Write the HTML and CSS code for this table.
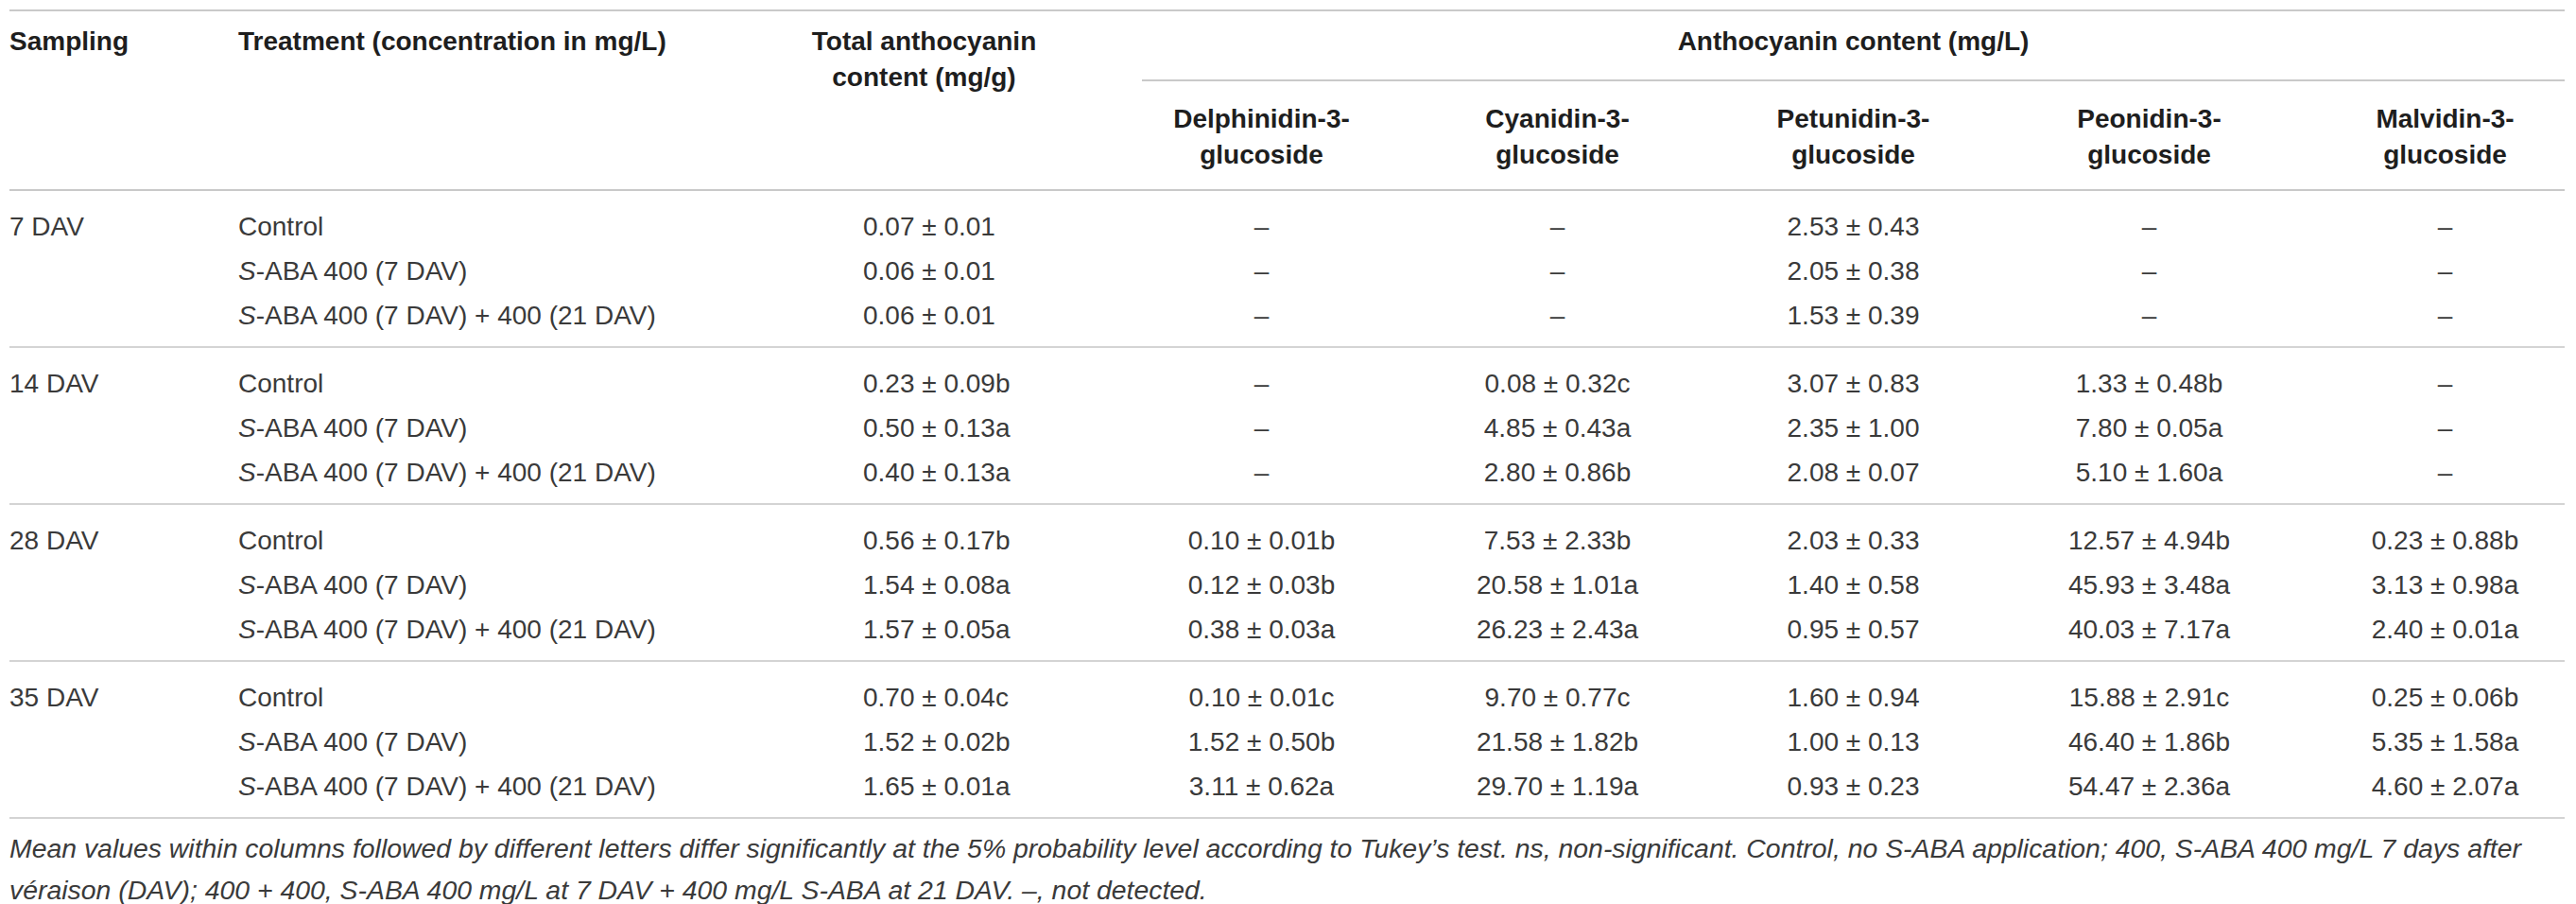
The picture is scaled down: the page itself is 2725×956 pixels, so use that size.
FILE: index.html
```html
<!DOCTYPE html>
<html lang="en">
  <head>
    <meta charset="UTF-8" />
    <meta name="viewport" content="width=device-width, initial-scale=1.0" />
    <title>Anthocyanin content</title>
    <link rel="stylesheet" href="styles.css">
  </head>
  <body>
    <div class="page">
      <table class="data">
        <colgroup>
          <col class="col-sampling" />
          <col class="col-treatment" />
          <col class="col-total" />
          <col class="col-anth" />
          <col class="col-anth" />
          <col class="col-anth" />
          <col class="col-anth" />
          <col class="col-anth" />
        </colgroup>
        <thead>
          <tr>
            <th rowspan="2" class="th-left">Sampling</th>
            <th rowspan="2" class="th-left">Treatment (concentration in mg/L)</th>
            <th rowspan="2" class="th-total">Total anthocyanin content (mg/g)</th>
            <th colspan="5" class="th-group"><div class="group-title">Anthocyanin content (mg/L)</div></th>
          </tr>
          <tr>
            <th class="th-sub">Delphinidin-3-glucoside</th>
            <th class="th-sub">Cyanidin-3-glucoside</th>
            <th class="th-sub">Petunidin-3-glucoside</th>
            <th class="th-sub">Peonidin-3-glucoside</th>
            <th class="th-sub">Malvidin-3-glucoside</th>
          </tr>
        </thead>
        <tbody>
          <tr>
            <td>7 DAV</td>
            <td>Control</td>
            <td class="total">0.07 ± 0.01</td>
            <td class="anth">–</td>
            <td class="anth">–</td>
            <td class="anth">2.53 ± 0.43</td>
            <td class="anth">–</td>
            <td class="anth">–</td>
          </tr>
          <tr>
            <td></td>
            <td><i>S</i>-ABA 400 (7 DAV)</td>
            <td class="total">0.06 ± 0.01</td>
            <td class="anth">–</td>
            <td class="anth">–</td>
            <td class="anth">2.05 ± 0.38</td>
            <td class="anth">–</td>
            <td class="anth">–</td>
          </tr>
          <tr>
            <td></td>
            <td><i>S</i>-ABA 400 (7 DAV) + 400 (21 DAV)</td>
            <td class="total">0.06 ± 0.01</td>
            <td class="anth">–</td>
            <td class="anth">–</td>
            <td class="anth">1.53 ± 0.39</td>
            <td class="anth">–</td>
            <td class="anth">–</td>
          </tr>
        </tbody>
        <tbody>
          <tr>
            <td>14 DAV</td>
            <td>Control</td>
            <td class="total">0.23 ± 0.09b</td>
            <td class="anth">–</td>
            <td class="anth">0.08 ± 0.32c</td>
            <td class="anth">3.07 ± 0.83</td>
            <td class="anth">1.33 ± 0.48b</td>
            <td class="anth">–</td>
          </tr>
          <tr>
            <td></td>
            <td><i>S</i>-ABA 400 (7 DAV)</td>
            <td class="total">0.50 ± 0.13a</td>
            <td class="anth">–</td>
            <td class="anth">4.85 ± 0.43a</td>
            <td class="anth">2.35 ± 1.00</td>
            <td class="anth">7.80 ± 0.05a</td>
            <td class="anth">–</td>
          </tr>
          <tr>
            <td></td>
            <td><i>S</i>-ABA 400 (7 DAV) + 400 (21 DAV)</td>
            <td class="total">0.40 ± 0.13a</td>
            <td class="anth">–</td>
            <td class="anth">2.80 ± 0.86b</td>
            <td class="anth">2.08 ± 0.07</td>
            <td class="anth">5.10 ± 1.60a</td>
            <td class="anth">–</td>
          </tr>
        </tbody>
        <tbody>
          <tr>
            <td>28 DAV</td>
            <td>Control</td>
            <td class="total">0.56 ± 0.17b</td>
            <td class="anth">0.10 ± 0.01b</td>
            <td class="anth">7.53 ± 2.33b</td>
            <td class="anth">2.03 ± 0.33</td>
            <td class="anth">12.57 ± 4.94b</td>
            <td class="anth">0.23 ± 0.88b</td>
          </tr>
          <tr>
            <td></td>
            <td><i>S</i>-ABA 400 (7 DAV)</td>
            <td class="total">1.54 ± 0.08a</td>
            <td class="anth">0.12 ± 0.03b</td>
            <td class="anth">20.58 ± 1.01a</td>
            <td class="anth">1.40 ± 0.58</td>
            <td class="anth">45.93 ± 3.48a</td>
            <td class="anth">3.13 ± 0.98a</td>
          </tr>
          <tr>
            <td></td>
            <td><i>S</i>-ABA 400 (7 DAV) + 400 (21 DAV)</td>
            <td class="total">1.57 ± 0.05a</td>
            <td class="anth">0.38 ± 0.03a</td>
            <td class="anth">26.23 ± 2.43a</td>
            <td class="anth">0.95 ± 0.57</td>
            <td class="anth">40.03 ± 7.17a</td>
            <td class="anth">2.40 ± 0.01a</td>
          </tr>
        </tbody>
        <tbody>
          <tr>
            <td>35 DAV</td>
            <td>Control</td>
            <td class="total">0.70 ± 0.04c</td>
            <td class="anth">0.10 ± 0.01c</td>
            <td class="anth">9.70 ± 0.77c</td>
            <td class="anth">1.60 ± 0.94</td>
            <td class="anth">15.88 ± 2.91c</td>
            <td class="anth">0.25 ± 0.06b</td>
          </tr>
          <tr>
            <td></td>
            <td><i>S</i>-ABA 400 (7 DAV)</td>
            <td class="total">1.52 ± 0.02b</td>
            <td class="anth">1.52 ± 0.50b</td>
            <td class="anth">21.58 ± 1.82b</td>
            <td class="anth">1.00 ± 0.13</td>
            <td class="anth">46.40 ± 1.86b</td>
            <td class="anth">5.35 ± 1.58a</td>
          </tr>
          <tr>
            <td></td>
            <td><i>S</i>-ABA 400 (7 DAV) + 400 (21 DAV)</td>
            <td class="total">1.65 ± 0.01a</td>
            <td class="anth">3.11 ± 0.62a</td>
            <td class="anth">29.70 ± 1.19a</td>
            <td class="anth">0.93 ± 0.23</td>
            <td class="anth">54.47 ± 2.36a</td>
            <td class="anth">4.60 ± 2.07a</td>
          </tr>
        </tbody>
      </table>

      <p class="note">
        Mean values within columns followed by different letters differ significantly at the 5% probability level according to Tukey’s test. ns, non-significant. Control, no S-ABA application; 400, S-ABA 400 mg/L 7 days after véraison (DAV); 400 + 400, S-ABA 400 mg/L at 7 DAV + 400 mg/L S-ABA at 21 DAV. –, not detected.
      </p>
    </div>
  </body>
</html>
```

FILE: styles.css
```css
body {
  margin: 0;
  background-color: #ffffff;
  font-family: "Liberation Sans", Arial, sans-serif;
  color: #3a3a3a;
}

.page {
  padding: 10px 12px 0 10px;
}

.data {
  width: 100%;
  table-layout: fixed;
  border-collapse: separate;
  border-spacing: 0;
  border-top: 2px solid #c9c9c9;
}

.col-sampling {
  width: 242px;
}

.col-treatment {
  width: 601px;
}

.col-total {
  width: 295px;
}

.col-anth {
  width: 313px;
}

th {
  font-size: 28px;
  line-height: 38px;
  font-weight: bold;
  color: #1e1e1e;
  vertical-align: top;
  padding: 0;
}

.th-left {
  text-align: left;
  padding-top: 13px;
}

.th-total {
  text-align: center;
  padding: 13px 46px 0 0;
}

.th-group {
  text-align: center;
  padding: 13px 0 0 60px;
}

.group-title {
  padding-bottom: 21px;
  border-bottom: 2px solid #c9c9c9;
}

.th-sub {
  text-align: center;
  padding: 21px 0 17px 60px;
}

thead th[rowspan],
thead tr:last-child th {
  border-bottom: 2px solid #c9c9c9;
}

td {
  font-size: 28px;
  line-height: 47px;
  padding: 0;
  white-space: nowrap;
  color: #3a3a3a;
}

tbody tr:first-child td {
  padding-top: 14px;
}

tbody tr:last-child td {
  padding-bottom: 9px;
  border-bottom: 2px solid #d4d4d4;
}

td.total {
  text-align: left;
  padding-left: 60px;
}

td.anth {
  text-align: center;
  padding-left: 60px;
}

.note {
  margin: 9px 0 0;
  font-size: 28.4px;
  line-height: 44px;
  font-style: italic;
  color: #3a3a3a;
}
```
